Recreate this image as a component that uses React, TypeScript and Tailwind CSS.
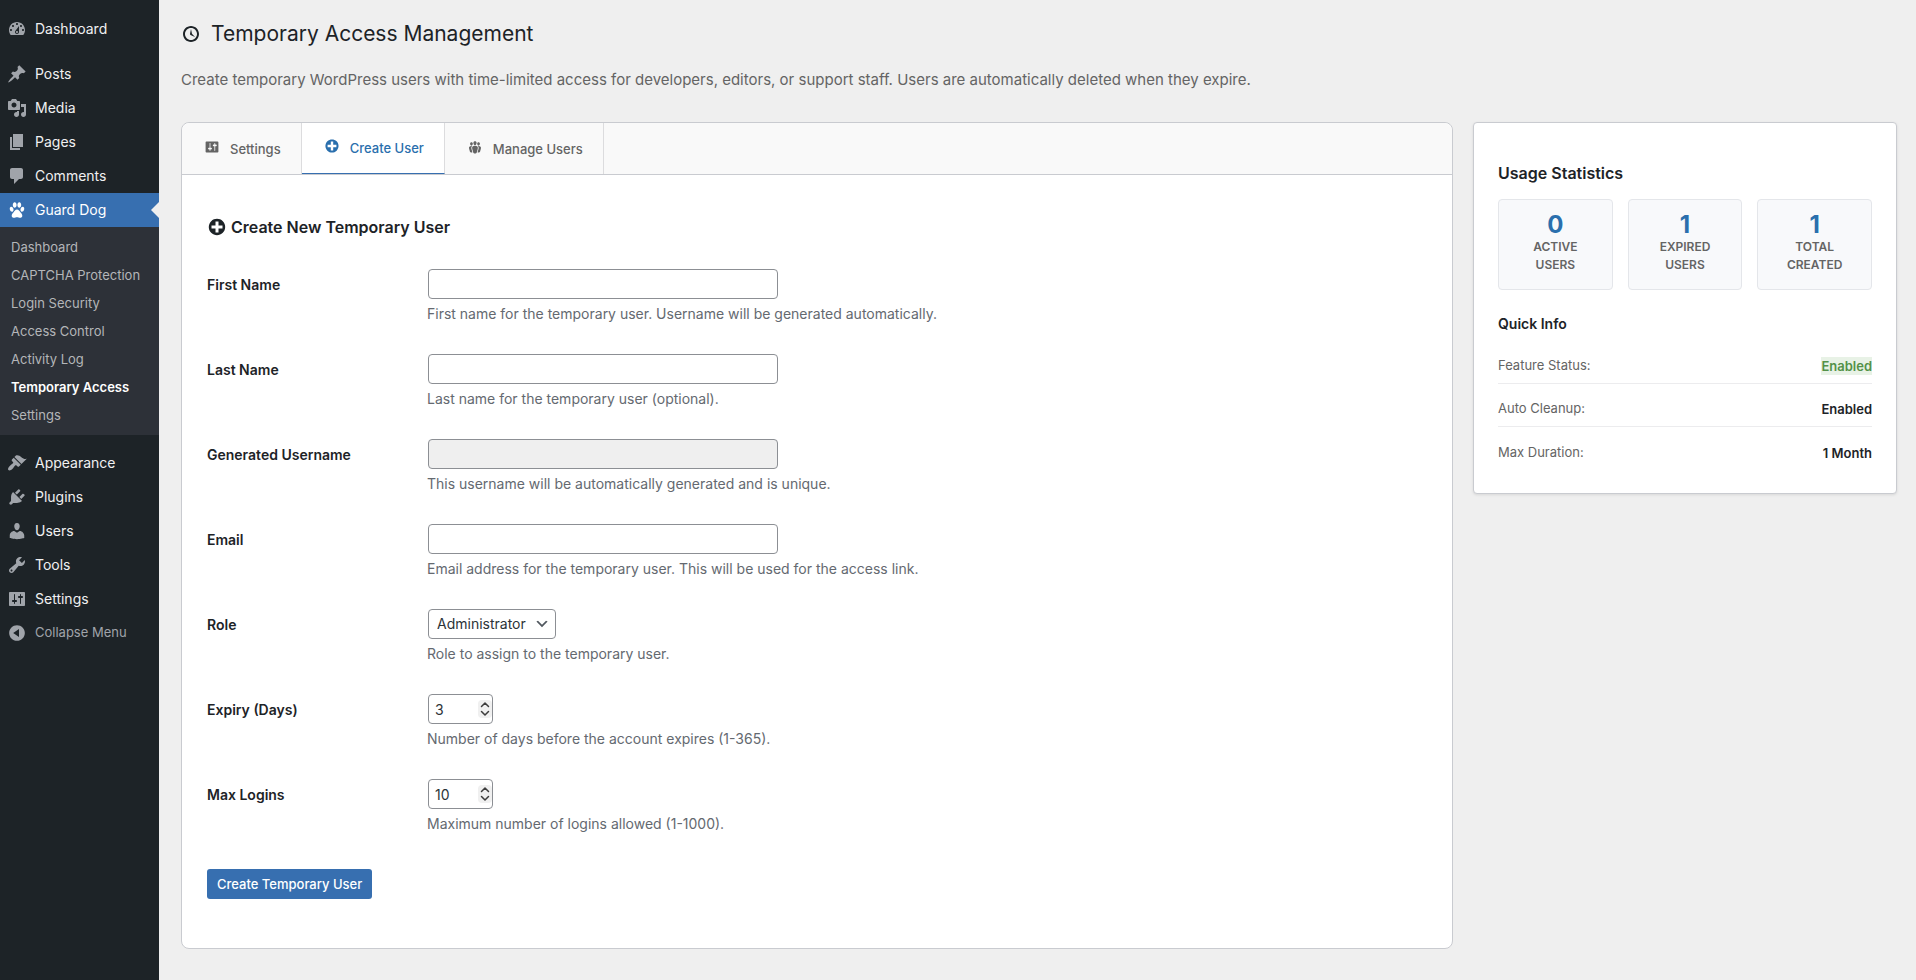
import { useState, type ReactNode } from "react";
import clsx from "clsx";

/* ── Icons (20×20 grid) ───────────────────────────────────── */

const ICONS = {
  dashboard:
    "M3.76 16h12.48c1.1-1.37 1.76-3.11 1.76-5 0-4.42-3.58-8-8-8s-8 3.58-8 8c0 1.89.66 3.63 1.76 5zM10 4c.55 0 1 .45 1 1s-.45 1-1 1-1-.45-1-1 .45-1 1-1zM6 6c.55 0 1 .45 1 1s-.45 1-1 1-1-.45-1-1 .45-1 1-1zm8 0c.55 0 1 .45 1 1s-.45 1-1 1-1-.45-1-1 .45-1 1-1zm-5.37 5.55L12 7v6c0 1.1-.9 2-2 2s-2-.9-2-2c0-.57.24-1.08.63-1.45zM4 10c.55 0 1 .45 1 1s-.45 1-1 1-1-.45-1-1 .45-1 1-1zm12 0c.55 0 1 .45 1 1s-.45 1-1 1-1-.45-1-1 .45-1 1-1zm-5 3c0-.55-.45-1-1-1s-1 .45-1 1 .45 1 1 1 1-.45 1-1z",
  post: "M10.44 3.02l1.82-1.82 6.36 6.35-1.83 1.82c-1.05-.68-2.48-.57-3.41.36l-.75.75c-.92.93-1.04 2.35-.35 3.41l-1.83 1.82-2.41-2.41-2.8 2.79c-.42.42-3.38 2.71-3.8 2.29s1.86-3.39 2.28-3.81l2.79-2.79L4.1 9.36l1.83-1.82c1.05.69 2.48.57 3.4-.36l.75-.75c.93-.92 1.05-2.35.36-3.41z",
  media:
    "M13 11V4c0-.55-.45-1-1-1h-1.67L9 1H5L3.67 3H2c-.55 0-1 .45-1 1v7c0 .55.45 1 1 1h10c.55 0 1-.45 1-1zM7 4.5c1.38 0 2.5 1.12 2.5 2.5S8.38 9.5 7 9.5 4.5 8.38 4.5 7 5.62 4.5 7 4.5zM14 6h5v10.5c0 1.38-1.12 2.5-2.5 2.5S14 17.88 14 16.5s1.12-2.5 2.5-2.5c.17 0 .34.02.5.05V9h-3V6zm-4 8.05V13h2v3.5c0 1.38-1.12 2.5-2.5 2.5S7 17.88 7 16.5 8.12 14 9.5 14c.17 0 .34.02.5.05z",
  page: "M6 15V2h10v13H6zm-1 1h8v2H3V5h2v11z",
  comments:
    "M5 2h9c1.1 0 2 .9 2 2v7c0 1.1-.9 2-2 2h-2l-5 5v-5H5c-1.1 0-2-.9-2-2V4c0-1.1.9-2 2-2z",
  paw: "M7.6 2.3c1.1-.1 1.9 1 2 2.5.1 1.5-.6 2.8-1.7 2.9s-2-1-2.1-2.5c-.1-1.5.7-2.8 1.8-2.9zM12.400 2.3c1.1.1 1.9 1.4 1.8 2.9-.1 1.5-1 2.6-2.1 2.5s-1.8-1.4-1.7-2.9c.1-1.5.9-2.6 2-2.5zM3.9 6.8c1-.3 2.1.6 2.5 2 .4 1.3 0 2.6-1 2.9s-2.1-.6-2.5-1.9c-.4-1.4 0-2.7 1-3zM16.1 6.8c1 .3 1.4 1.6 1 3-.4 1.3-1.5 2.2-2.5 1.9s-1.4-1.6-1-2.9c.4-1.4 1.5-2.3 2.5-2zM10 9.5c1.7 0 2.5 1.5 3.4 2.7.9 1.1 1.9 2 1.9 3.5 0 1.3-1 2.1-2.2 2.1-1.2 0-1.9-.6-3.1-.6s-1.9.6-3.1.6c-1.2 0-2.2-.8-2.2-2.1 0-1.5 1-2.4 1.9-3.5.9-1.2 1.7-2.7 3.4-2.7z",
  appearance:
    "M14.48 11.06L7.41 3.99l1.5-1.5c.5-.56 2.3-.47 3.51.32 1.21.8 1.43 1.28 2.91 2.1 1.18.64 2.45 1.26 4.45.85zm-.71.71L6.7 4.7 4.93 6.47c-.39.39-.39 1.02 0 1.41l1.06 1.06c.39.39.39 1.03 0 1.42-.6.6-1.43 1.11-2.21 1.69-.35.26-.7.53-1.01.84C1.43 14.23.4 16.08 1.4 17.07c.99 1 2.84-.03 4.18-1.36.31-.31.58-.66.85-1.02.57-.78 1.08-1.61 1.69-2.21.39-.39 1.02-.39 1.41 0l1.06 1.06c.39.39 1.02.39 1.41 0z",
  plugins:
    "M13.11 4.36L9.87 7.6 8 5.73l3.24-3.24c.35-.34 1.05-.2 1.56.32.52.51.66 1.21.31 1.55zm-8 1.77l.91-1.12 9.01 9.01-1.19.84c-.71.71-2.63 1.16-3.82 1.16H6.14L4.9 17.26c-.59.59-1.54.59-2.12 0-.59-.58-.59-1.53 0-2.12l1.24-1.24v-3.88c0-1.13.4-3.19 1.09-3.89zm7.26 3.97l3.24-3.24c.34-.35 1.04-.21 1.55.31.52.51.66 1.21.31 1.55l-3.24 3.25z",
  users:
    "M10 9.25c-2.27 0-2.73-3.44-2.73-3.44C7 4.02 7.82 2 9.97 2c2.16 0 2.98 2.02 2.71 3.81 0 0-.41 3.44-2.68 3.44zm0 2.57L12.72 10c2.39 0 4.52 2.33 4.52 4.53v2.49s-3.65 1.13-7.24 1.13c-3.65 0-7.24-1.13-7.24-1.13v-2.49c0-2.25 1.94-4.48 4.47-4.48z",
  tools:
    "M16.68 9.77c-1.34 1.34-3.3 1.67-4.95.99l-5.41 6.52c-.99.99-2.59.99-3.58 0s-.99-2.59 0-3.57l6.52-5.42c-.68-1.65-.35-3.61.99-4.95 1.28-1.28 3.12-1.62 4.72-1.06l-2.89 2.89 2.82 2.82 2.86-2.87c.53 1.58.18 3.39-1.08 4.65zM3.81 16.21c.4.39 1.04.39 1.43 0 .4-.4.4-1.04 0-1.43-.39-.4-1.03-.4-1.43 0-.39.39-.39 1.03 0 1.43z",
  settings:
    "M18 16V4c0-.55-.45-1-1-1H3c-.55 0-1 .45-1 1v12c0 .55.45 1 1 1h14c.55 0 1-.45 1-1zM8 11h1c.55 0 1 .45 1 1s-.45 1-1 1H8v1.5c0 .28-.22.5-.5.5s-.5-.22-.5-.5V13H6c-.55 0-1-.45-1-1s.45-1 1-1h1V5.5c0-.28.22-.5.5-.5s.5.22.5.5V11zm5-2h-1c-.55 0-1-.45-1-1s.45-1 1-1h1V5.5c0-.28.22-.5.5-.5s.5.22.5.5V7h1c.55 0 1 .45 1 1s-.45 1-1 1h-1v5.5c0 .28-.22.5-.5.5s-.5-.22-.5-.5V9z",
  collapse:
    "M10 2.16c4.33 0 7.84 3.51 7.84 7.84s-3.51 7.84-7.84 7.84S2.16 14.33 2.16 10 5.71 2.16 10 2.16zm2 11.72V6.12L6.18 9.97z",
  clock:
    "M10 2c4.42 0 8 3.58 8 8s-3.58 8-8 8-8-3.58-8-8 3.58-8 8-8zm0 14c3.31 0 6-2.69 6-6s-2.69-6-6-6-6 2.69-6 6 2.69 6 6 6zm-.71-5.29c.07.05.14.1.23.15l-.02.02L14 13l-3.03-3.19L10 5l-.97 4.81h.01c0 .02-.01.05-.02.09S9 9.97 9 10c0 .28.1.52.29.71z",
  plus: "M15.8 4.2c3.2 3.21 3.2 8.39 0 11.6-3.21 3.2-8.39 3.2-11.6 0C1 12.59 1 7.41 4.2 4.2 7.41 1 12.59 1 15.8 4.2zm-4.3 11.3v-4h4v-3h-4v-4h-3v4h-4v3h4v4h3z",
  groups:
    "M8.03 4.46c-.29 1.28.55 3.46 1.97 3.46 1.41 0 2.25-2.18 1.96-3.46-.22-.98-1.08-1.63-1.96-1.63-.89 0-1.74.65-1.97 1.63zm-4.13.9c-.25 1.08.47 2.93 1.67 2.93s1.92-1.85 1.67-2.93c-.19-.83-.92-1.39-1.67-1.39s-1.48.56-1.67 1.39zm8.86 0c-.25 1.08.47 2.93 1.66 2.93 1.2 0 1.92-1.85 1.67-2.93-.19-.83-.92-1.39-1.67-1.39-.74 0-1.47.56-1.66 1.39zm-.59 11.43l1.25-4.3C14.2 10 12.71 8.47 10 8.47c-2.72 0-4.21 1.53-3.44 4.02l1.26 4.3C8.05 17.51 9 18 10 18c.98 0 1.94-.49 2.17-1.21zm-6.1-7.63c-.49.67-.96 1.83-.42 3.59l1.12 3.79c-.34.2-.77.31-1.2.31-.85 0-1.65-.41-1.85-1.03l-1.07-3.65c-.65-2.11.61-3.4 2.92-3.4.27 0 .54.02.79.06-.1.1-.2.22-.29.33zm8.35-.39c2.31 0 3.58 1.29 2.92 3.4l-1.07 3.65c-.2.62-1 1.03-1.85 1.03-.43 0-.86-.11-1.2-.31l1.11-3.77c.55-1.78.08-2.94-.42-3.61-.08-.11-.18-.23-.28-.33.25-.04.51-.06.79-.06z",
};

type IconName = keyof typeof ICONS;

function Icon({ name, className }: { name: IconName; className?: string }) {
  return (
    <svg
      viewBox="0 0 20 20"
      fill="currentColor"
      fillRule="evenodd"
      aria-hidden="true"
      className={clsx("shrink-0", className)}
    >
      <path d={ICONS[name]} />
    </svg>
  );
}

/* ── Sidebar ──────────────────────────────────────────────── */

interface MenuEntry {
  label: string;
  icon: IconName;
}

const CONTENT_MENU: MenuEntry[] = [
  { label: "Posts", icon: "post" },
  { label: "Media", icon: "media" },
  { label: "Pages", icon: "page" },
  { label: "Comments", icon: "comments" },
];

const ADMIN_MENU: MenuEntry[] = [
  { label: "Appearance", icon: "appearance" },
  { label: "Plugins", icon: "plugins" },
  { label: "Users", icon: "users" },
  { label: "Tools", icon: "tools" },
  { label: "Settings", icon: "settings" },
];

const GUARD_DOG_PAGES = [
  "Dashboard",
  "CAPTCHA Protection",
  "Login Security",
  "Access Control",
  "Activity Log",
  "Temporary Access",
  "Settings",
];

function MenuItem({ label, icon }: MenuEntry) {
  return (
    <li>
      <a href="#" className="flex h-[34px] items-center gap-2 pl-[7px] text-sm text-[#f0f0f1]">
        <Icon name={icon} className="size-5 text-[#a0a4aa]" />
        {label}
      </a>
    </li>
  );
}

function Sidebar() {
  return (
    <nav className="w-[159px] shrink-0 bg-[#1d2327] pt-3">
      <ul>
        <MenuItem label="Dashboard" icon="dashboard" />
      </ul>
      <ul className="mt-[11px]">
        {CONTENT_MENU.map((item) => (
          <MenuItem key={item.label} {...item} />
        ))}
        <li>
          <a
            href="#"
            className="relative flex h-[34px] items-center gap-2 bg-[#376fb0] pl-[7px] text-sm text-white"
          >
            <Icon name="paw" className="size-5" />
            Guard Dog
            <span className="absolute top-[9px] right-0 border-8 border-l-0 border-transparent border-r-[#efefef]" />
          </a>
          <ul className="bg-[#2d3138] pt-[7px] pb-[5px]">
            {GUARD_DOG_PAGES.map((page) => (
              <li key={page}>
                <a
                  href="#"
                  className={clsx(
                    "flex h-7 items-center pl-[11px] text-[13px] whitespace-nowrap",
                    page === "Temporary Access" ? "font-semibold text-white" : "text-[#b4b6b9]"
                  )}
                >
                  {page}
                </a>
              </li>
            ))}
          </ul>
        </li>
      </ul>
      <ul className="mt-[11px]">
        {ADMIN_MENU.map((item) => (
          <MenuItem key={item.label} {...item} />
        ))}
      </ul>
      <button
        type="button"
        className="flex h-[34px] w-full items-center gap-2 pl-[7px] text-[13px] text-[#a0a4aa]"
      >
        <Icon name="collapse" className="size-5" />
        Collapse Menu
      </button>
    </nav>
  );
}

/* ── Tabs ─────────────────────────────────────────────────── */

const TABS: MenuEntry[] = [
  { label: "Settings", icon: "settings" },
  { label: "Create User", icon: "plus" },
  { label: "Manage Users", icon: "groups" },
];

function Tabs({ active, onSelect }: { active: string; onSelect: (label: string) => void }) {
  return (
    <div role="tablist" className="flex h-[52px] rounded-t-lg border-b border-[#c9cbd0] bg-[#f9f9f9]">
      {TABS.map(({ label, icon }) => {
        const selected = label === active;
        return (
          <button
            key={label}
            type="button"
            role="tab"
            aria-selected={selected}
            onClick={() => onSelect(label)}
            className={clsx(
              "flex items-center gap-2.5 border-r border-r-[#dcdcde] pt-0.5 pr-5 pl-[22px] text-[13px] font-medium first:rounded-tl-lg",
              selected ? "border-b border-b-[#376fb0] bg-white text-[#2a6fad]" : "text-[#646464]"
            )}
          >
            <Icon name={icon} className="mb-1.5 size-4" />
            {label}
          </button>
        );
      })}
    </div>
  );
}

/* ── Form ─────────────────────────────────────────────────── */

const FIELD = "mx-px h-[30px] rounded-[4px] border border-[#8c8f94] text-sm text-[#2c3338]";

function Row({
  id,
  label,
  help,
  children,
}: {
  id: string;
  label: string;
  help: string;
  children: ReactNode;
}) {
  return (
    <div className="grid grid-cols-[220px_1fr]">
      <label htmlFor={id} className="pt-1.5 text-sm font-semibold">
        {label}
      </label>
      <div>
        <div className="flex">{children}</div>
        <p id={`${id}-help`} className="mt-[5px] text-sm text-[#646970]">
          {help}
        </p>
      </div>
    </div>
  );
}

function TextInput({ id, type = "text", readOnly }: { id: string; type?: string; readOnly?: boolean }) {
  return (
    <input
      id={id}
      type={type}
      readOnly={readOnly}
      aria-describedby={`${id}-help`}
      className={clsx(FIELD, "w-[350px] px-2", readOnly ? "bg-[#efefef]" : "bg-white")}
    />
  );
}

function NumberInput({ id, value, max }: { id: string; value: number; max: number }) {
  return (
    <div className="relative">
      <input
        id={id}
        type="number"
        min={1}
        max={max}
        defaultValue={value}
        aria-describedby={`${id}-help`}
        className={clsx(FIELD, "w-[65px] bg-white pl-1.5 [appearance:textfield]")}
      />
      <svg
        viewBox="0 0 14 18"
        fill="none"
        aria-hidden="true"
        className="pointer-events-none absolute top-1.5 right-0.5 h-[18px] w-3.5"
      >
        <rect width="14" height="18" rx="4" fill="#f0f0f0" />
        <path
          d="M3.5 6.500 7 3l3.500 3.500M3.500 11.500 7 15l3.500-3.500"
          stroke="#3c3c3c"
          strokeWidth="1.5"
          strokeLinecap="round"
          strokeLinejoin="round"
        />
      </svg>
    </div>
  );
}

function CreateUserForm() {
  return (
    <form className="px-[25px] pt-10 pb-[49px]" onSubmit={(e) => e.preventDefault()}>
      <h2 className="flex h-6 items-center gap-1 text-base font-semibold">
        <Icon name="plus" className="size-5" />
        Create New Temporary User
      </h2>

      <div className="mt-[30px] flex flex-col gap-[30px] leading-5">
        <Row
          id="first-name"
          label="First Name"
          help="First name for the temporary user. Username will be generated automatically."
        >
          <TextInput id="first-name" />
        </Row>
        <Row id="last-name" label="Last Name" help="Last name for the temporary user (optional).">
          <TextInput id="last-name" />
        </Row>
        <Row
          id="username"
          label="Generated Username"
          help="This username will be automatically generated and is unique."
        >
          <TextInput id="username" readOnly />
        </Row>
        <Row
          id="email"
          label="Email"
          help="Email address for the temporary user. This will be used for the access link."
        >
          <TextInput id="email" type="email" />
        </Row>
        <Row id="role" label="Role" help="Role to assign to the temporary user.">
          <div className="relative">
            <select
              id="role"
              aria-describedby="role-help"
              className={clsx(FIELD, "w-32 appearance-none bg-white pr-6 pl-2")}
            >
              <option>Administrator</option>
              <option>Editor</option>
              <option>Author</option>
            </select>
            <svg
              viewBox="0 0 20 20"
              fill="#50575e"
              aria-hidden="true"
              className="pointer-events-none absolute top-[7px] right-[7px] size-4"
            >
              <path d="M5 6l5 5 5-5 2 1-7 7-7-7 2-1z" />
            </svg>
          </div>
        </Row>
        <Row id="expiry" label="Expiry (Days)" help="Number of days before the account expires (1-365).">
          <NumberInput id="expiry" value={3} max={365} />
        </Row>
        <Row id="max-logins" label="Max Logins" help="Maximum number of logins allowed (1-1000).">
          <NumberInput id="max-logins" value={10} max={1000} />
        </Row>
      </div>

      <button
        type="submit"
        className="mt-[35px] h-[30px] rounded-[3px] bg-[#376fb0] px-2.5 pt-0.5 text-[13px] font-medium text-white"
      >
        Create Temporary User
      </button>
    </form>
  );
}

/* ── Statistics ───────────────────────────────────────────── */

const STATS = [
  { value: 0, label: "Active Users" },
  { value: 1, label: "Expired Users" },
  { value: 1, label: "Total Created" },
];

const QUICK_INFO = [
  { label: "Feature Status:", value: "Enabled", highlight: true },
  { label: "Auto Cleanup:", value: "Enabled" },
  { label: "Max Duration:", value: "1 Month" },
];

function StatsPanel() {
  return (
    <aside className="rounded-[4px] border border-[#c9cbd0] bg-white px-6 pt-[38px] pb-[23px] shadow-[0_1px_3px_rgba(0,0,0,0.1)]">
      <h2 className="text-base leading-6 font-semibold">Usage Statistics</h2>
      <div className="mt-3.5 grid grid-cols-3 gap-[15px]">
        {STATS.map(({ value, label }) => (
          <div
            key={label}
            className="flex h-[91px] flex-col items-center rounded-[4px] border border-[#e4e6ea] bg-[#f8f9fb] px-7 pt-[13px] text-center"
          >
            <span className="text-2xl leading-6 font-bold text-[#2a6fad]">{value}</span>
            <span className="mt-px text-xs leading-[18px] font-semibold text-[#646464] uppercase">
              {label}
            </span>
          </div>
        ))}
      </div>

      <h3 className="mt-6 text-sm leading-5 font-semibold">Quick Info</h3>
      <dl className="mt-[7px] divide-y divide-[#ececee] text-[13px]">
        {QUICK_INFO.map(({ label, value, highlight }) => (
          <div key={label} className="flex h-[43px] items-center justify-between pt-2">
            <dt className="text-[#646464]">{label}</dt>
            <dd
              className={clsx(
                "leading-[18px] font-semibold",
                highlight && "bg-[#e8f2e6] text-[#539148]"
              )}
            >
              {value}
            </dd>
          </div>
        ))}
      </dl>
    </aside>
  );
}

/* ── Page ─────────────────────────────────────────────────── */

export default function App() {
  const [tab, setTab] = useState("Create User");

  return (
    <div className="flex min-h-screen bg-[#efefef] font-['Inter',sans-serif] text-[#1d2327]">
      <Sidebar />
      <main className="min-w-0 flex-1 pt-[19px] pr-[19px] pb-8 pl-[22px]">
        <h1 className="flex items-center gap-2.5 text-[21px] leading-[30px]">
          <Icon name="clock" className="size-5" />
          Temporary Access Management
        </h1>
        <p className="mt-[19px] text-[15px] leading-6 text-[#646464]">
          Create temporary WordPress users with time-limited access for developers, editors, or support staff. Users
          are automatically deleted when they expire.
        </p>

        <div className="mt-[30px] grid grid-cols-[3fr_1fr] items-start gap-5">
          <section className="rounded-lg border border-[#c9cbd0] bg-white">
            <Tabs active={tab} onSelect={setTab} />
            <CreateUserForm />
          </section>
          <StatsPanel />
        </div>
      </main>
    </div>
  );
}
